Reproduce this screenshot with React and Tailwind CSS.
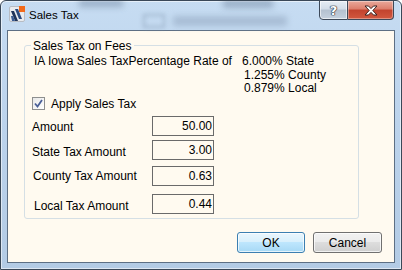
export default function App() {
  const font = "font-['Liberation_Sans',Arial,sans-serif]";
  return (
    <div className={`w-[402px] h-[270px] relative overflow-hidden ${font} text-[12px] text-black bg-[linear-gradient(180deg,#c6dcf2_0%,#bcd3ec_45%,#b3cbe5_100%)] border border-[#3a4858] rounded-t-[6px] flex flex-col shadow-[inset_0_0_0_1px_rgba(255,255,255,0.55)]`}>
      <div className="absolute left-[78px] top-[-2px] w-[44px] h-[8px] bg-[#7f94ad] opacity-60 blur-[3px]" />
      <div className="absolute left-[222px] top-[-2px] w-[50px] h-[9px] bg-[#7f94ad] opacity-60 blur-[3px]" />
      <div className="absolute left-[142px] top-[13px] w-[22px] h-[14px] border-2 border-[#8ea3bc] opacity-70 blur-[2px]" />
      <div className="absolute left-[172px] top-[15px] w-[114px] h-[10px] bg-[#90a5be] opacity-55 blur-[3px]" />

      <div className="h-[29px] flex items-start pl-[8px] relative">
        <svg width="16" height="16" viewBox="0 0 16 16" className="mt-[5px] shrink-0">
          <rect x="0.5" y="0.5" width="15" height="15" rx="1.5" fill="#e9ebee" stroke="#b7bcc4" />
          <rect x="10" y="0" width="6" height="6" fill="#f26a1b" />
          <path d="M2 5 L5 5 L9 15 L6 15 Z" fill="#1f3358" />
          <path d="M6 3 L9 3 L13 13 L10 13 Z" fill="#2c4a7e" />
          <path d="M2 10 L4 10 L6 15 L3 15 Z" fill="#3a5b92" />
        </svg>
        <span className="ml-[4px] mt-[7px] text-[11.5px] leading-[14px]">Sales Tax</span>
      </div>

      <div className="absolute top-[-1px] right-[7px] flex">
        <div className="w-[29px] h-[20px] border border-[#3d4959] rounded-bl-[4px] bg-[linear-gradient(180deg,#e6edf4_0%,#d3dde8_45%,#b4c1d0_50%,#c5d1de_100%)] flex items-center justify-center shadow-[inset_0_0_0_1px_rgba(255,255,255,0.6)]">
          <span className="text-white font-bold text-[13px] leading-none [text-shadow:0_0_1px_#2a3340,0_0_1px_#2a3340,0_0_1px_#2a3340,0_0_1px_#2a3340] font-['DejaVu_Sans',sans-serif]">?</span>
        </div>
        <div className="w-[46px] h-[20px] border border-l-0 border-[#3d4959] rounded-br-[4px] bg-[linear-gradient(180deg,#e9a99b_0%,#dc7d6b_45%,#c2432e_50%,#d2583f_100%)] flex items-center justify-center shadow-[inset_0_0_0_1px_rgba(255,255,255,0.35)]">
          <svg width="14" height="11" viewBox="0 0 14 11">
            <path d="M1 1 L4.5 1 L7 3.6 L9.5 1 L13 1 L8.8 5.5 L13 10 L9.5 10 L7 7.4 L4.5 10 L1 10 L5.2 5.5 Z" fill="#ffffff" stroke="#3b2320" strokeWidth="1" strokeLinejoin="round" />
          </svg>
        </div>
      </div>

      <div className="mx-[6px] h-[233px] border border-[#5d6f84] bg-[#fffaf0] flex flex-col pl-[16px] pt-[14px]">
        <div className="w-[335px] h-[174px] border border-[#d5dfe5] rounded-[3px] relative flex flex-col pl-[7px] pt-[9px]">
          <span className="absolute left-[6px] top-[-7px] px-[2px] bg-[#fffaf0] leading-[14px]">Sales Tax on Fees</span>

          <div className="flex leading-[13.5px] pl-[2px]">
            <span className="w-[208px] shrink-0 whitespace-nowrap">IA Iowa Sales TaxPercentage Rate of</span>
            <div className="flex flex-col whitespace-nowrap">
              <span>6.000% State</span>
              <span className="pl-[2px]">1.255% County</span>
              <span className="pl-[2px]">0.879% Local</span>
            </div>
          </div>

          <div className="flex items-center h-[13px] mt-[1px]">
            <div className="w-[13px] h-[13px] border border-[#8e8f8f] bg-[linear-gradient(135deg,#e8e8e8_0%,#ffffff_100%)] flex items-center justify-center shrink-0">
              <svg width="9" height="9" viewBox="0 0 9 9">
                <path d="M1 4.5 L3.5 7.5 L8 1" fill="none" stroke="#4a5f97" strokeWidth="1.8" />
              </svg>
            </div>
            <span className="ml-[6px] leading-[14px] mt-[2px]">Apply Sales Tax</span>
          </div>

          <Row label="Amount" value="50.00" mt="mt-[6px]" lpt="pt-[4px]" lml="" />
          <Row label="State Tax Amount" value="3.00" mt="mt-[4px]" lpt="pt-[5px]" lml="" />
          <Row label="County Tax Amount" value="0.63" mt="mt-[6px]" lpt="pt-[3.5px]" lml="pl-[1px]" />
          <Row label="Local Tax Amount" value="0.44" mt="mt-[8px]" lpt="pt-[5px]" lml="pl-[2px]" />
        </div>

        <div className="flex justify-end gap-[8px] pr-[12px] mt-[13px]">
          <button className="w-[68px] h-[21px] rounded-[3px] border border-[#3c7fb1] bg-[linear-gradient(180deg,#eaf6fd_0%,#d9f0fc_45%,#bee6fd_50%,#a7d9f5_100%)] shadow-[inset_0_0_0_1px_rgba(255,255,255,0.7)] text-[12px] leading-[14px] flex items-center justify-center">OK</button>
          <button className="w-[69px] h-[21px] rounded-[3px] border border-[#707070] bg-[linear-gradient(180deg,#f2f2f2_0%,#ebebeb_45%,#dddddd_50%,#cfcfcf_100%)] shadow-[inset_0_0_0_1px_rgba(255,255,255,0.7)] text-[12px] leading-[14px] flex items-center justify-center">Cancel</button>
        </div>
      </div>
    </div>
  );
}

function Row({ label, value, mt, lpt, lml }) {
  return (
    <div className={`flex ${mt}`}>
      <div className={`w-[120px] shrink-0 leading-[14px] ${lpt} ${lml} whitespace-nowrap`}>{label}</div>
      <div className="w-[62px] h-[20px] border border-[#6a6a6a] bg-[#fffaf0] text-right pr-[1px] leading-[18px]">{value}</div>
    </div>
  );
}
